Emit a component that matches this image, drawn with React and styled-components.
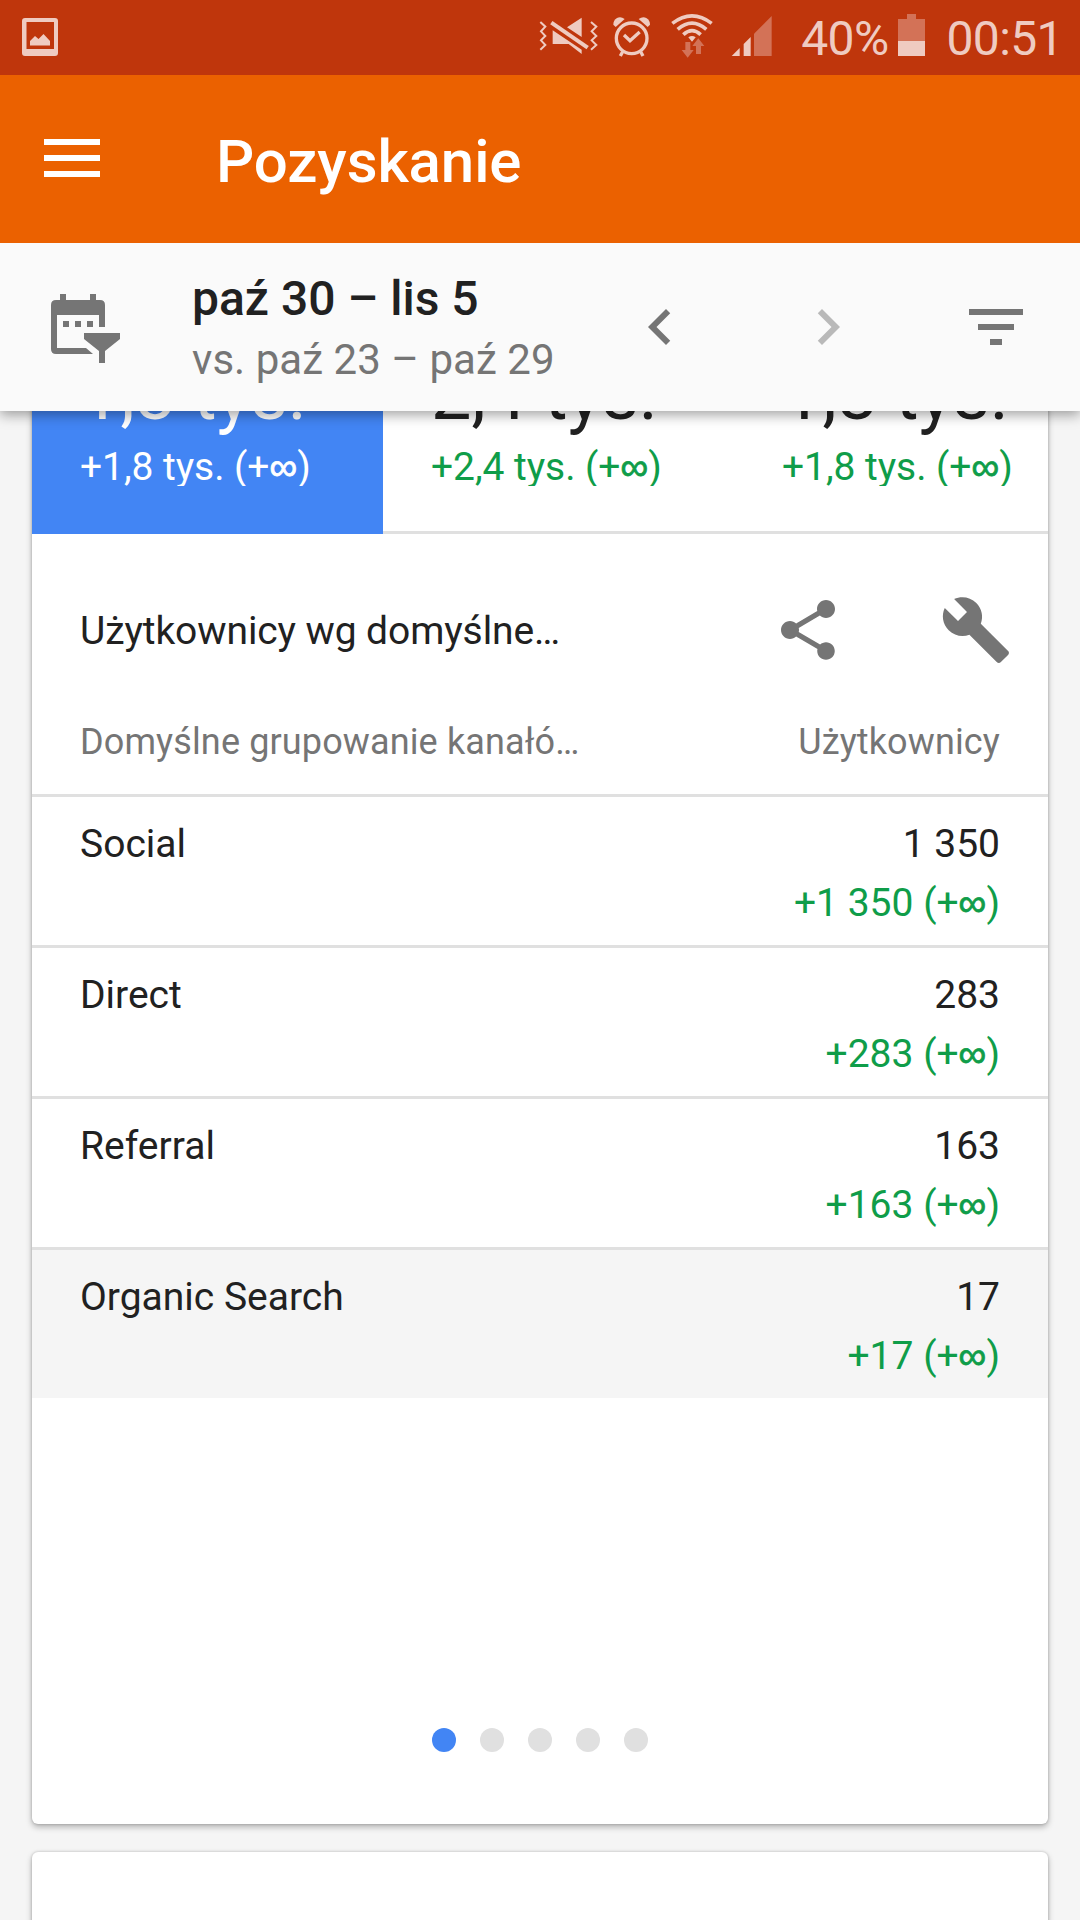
import { useState } from "react";
import styled, { createGlobalStyle } from "styled-components";

const metrics = [
  { value: "1,8 tys.", delta: "+1,8 tys." },
  { value: "2,4 tys.", delta: "+2,4 tys." },
  { value: "1,8 tys.", delta: "+1,8 tys." },
];

const channels = [
  { name: "Social", value: "1 350", delta: "+1 350" },
  { name: "Direct", value: "283", delta: "+283" },
  { name: "Referral", value: "163", delta: "+163" },
  { name: "Organic Search", value: "17", delta: "+17" },
];

function StatusIcons() {
  return (
    <StatusSvg width="227" height="75" viewBox="0 0 681 225">
      {/* vibrate / muted */}
      <g transform="translate(-28 0)">
        <g fill="none" stroke="#efcbc1" strokeWidth="6">
          <path d="M32 66L47 80L34 94L47 108L34 121L47 135L32 149" />
          <path d="M184 66L200 80L186 94L200 108L186 121L200 135L184 149" />
        </g>
        <path d="M112 82L156 53V111ZM69 91L156 149V162L117 132H69Z" fill="#efcbc1" />
        <path d="M65 68L174 143" stroke="#efcbc1" strokeWidth="12" />
      </g>
      {/* alarm */}
      <g transform="translate(-28 0)" fill="none" stroke="#efcbc1">
        <circle cx="306" cy="115" r="46" strokeWidth="10" />
        <path d="M283 105L301 122L330 96" strokeWidth="10" />
        <path d="M279 155L272 168M333 155L340 168" strokeWidth="10" />
        <path d="M258 81L251 74Q251 61 262 54Q273 48 285 57Z" fill="#efcbc1" stroke="none" />
        <path d="M354 81L361 74Q361 61 350 54Q339 48 327 57Z" fill="#efcbc1" stroke="none" />
      </g>
      {/* wifi */}
      <g transform="translate(-28 0)">
        <g fill="none" stroke="#efcbc1" strokeWidth="11">
          <path d="M428 70Q487 25 546 70" />
          <path d="M444 88Q487 51 530 88" />
          <path d="M461 104Q487 80 513 104" />
        </g>
        <path d="M476 112Q487 104 498 112L487 125Z" fill="#efcbc1" />
        <path d="M467 126H482V150H492L474 173L456 150H467Z" fill="#d37257" />
        <path d="M499 162V138H488L506 115L524 138H514V162Z" fill="#d37257" />
      </g>
      {/* signal */}
      <g transform="translate(-28 0)" fill="#efcbc1">
        <path d="M606 168L630 144V168Z" />
        <path d="M642 168V132L663 111V168Z" />
        <path d="M673 168V101L726 48V168Z" fill="#d37257" />
      </g>
    </StatusSvg>
  );
}

function App() {
  const [active, setActive] = useState(0);
  const [page, setPage] = useState(0);

  return (
    <>
      <GlobalStyle />
      <Screen>
        <StatusBar>
          <PictureIcon width="36" height="38" viewBox="0 0 36 38">
            <path
              fillRule="evenodd"
              d="M3 0H33Q36 0 36 3V35Q36 38 33 38H3Q0 38 0 35V3Q0 0 3 0ZM4.5 4V31H32V4Z"
            />
            <path d="M8 27.5V23L13 18L16.5 21L21.5 16L28 23V27.5Z" />
          </PictureIcon>
          <StatusIcons />
          <StatusText>40%</StatusText>
          <Battery width="27" height="42" viewBox="0 0 27 42">
            <path d="M0 5H9V0H18V5H27V27H0Z" fill="#d37257" />
            <path d="M0 27H27V42H0Z" fill="#efcbc1" />
          </Battery>
          <StatusText>00:51</StatusText>
        </StatusBar>

        <AppBar>
          <MenuButton>
            <span />
            <span />
            <span />
          </MenuButton>
          <AppTitle>Pozyskanie</AppTitle>
        </AppBar>

        <DateBar>
          <CalendarIcon width="69" height="69" viewBox="0 0 69 69">
            <path
              fillRule="evenodd"
              d="M9 0H15V6H39V0H45V6H49Q54 6 54 11V33H48V21H6V54H35L42 60H5Q0 60 0 55V11Q0 6 5 6H9Z"
            />
            <path d="M12 27H18V33H12ZM24 27H30V33H24ZM36 27H42V33H36Z" />
            <path d="M33 39H69V45L54 57V69H48V57L33 45Z" />
          </CalendarIcon>
          <DateRange>
            <DateMain>paź 30 – lis 5</DateMain>
            <DateCompare>vs. paź 23 – paź 29</DateCompare>
          </DateRange>
          <DateActions>
            <Icon viewBox="0 0 24 24">
              <path d="M15.41 7.41L14 6l-6 6 6 6 1.41-1.41L10.83 12z" />
            </Icon>
            <Icon viewBox="0 0 24 24" $color="#b9b9b9">
              <path d="M10 6L8.59 7.41 13.17 12l-4.58 4.59L10 18l6-6z" />
            </Icon>
            <Icon viewBox="0 0 24 24">
              <path d="M10 18h4v-2h-4v2zM3 6v2h18V6H3zm3 7h12v-2H6v2z" />
            </Icon>
          </DateActions>
        </DateBar>

        <Content>
          <ReportCard>
            <Metrics>
              {metrics.map((metric, i) => (
                <Metric key={i} $active={i === active} onClick={() => setActive(i)}>
                  <MetricValue>{metric.value}</MetricValue>
                  <MetricDelta>
                    {metric.delta} (+<Infinite>∞</Infinite>)
                  </MetricDelta>
                </Metric>
              ))}
            </Metrics>
            <CardHeader>
              <CardTitle>Użytkownicy wg domyślne…</CardTitle>
              <CardActions>
                <Icon viewBox="0 0 24 24">
                  <path d="M18 16.08c-.76 0-1.44.3-1.96.77L8.91 12.7c.05-.23.09-.46.09-.7s-.04-.47-.09-.7l7.05-4.11c.54.5 1.25.81 2.04.81 1.66 0 3-1.34 3-3s-1.34-3-3-3-3 1.34-3 3c0 .24.04.47.09.7L8.04 9.81C7.5 9.31 6.79 9 6 9c-1.66 0-3 1.34-3 3s1.34 3 3 3c.79 0 1.5-.31 2.04-.81l7.12 4.16c-.05.21-.08.43-.08.65 0 1.61 1.31 2.92 2.92 2.92 1.61 0 2.92-1.31 2.92-2.92s-1.31-2.92-2.92-2.92z" />
                </Icon>
                <Icon viewBox="0 0 24 24">
                  <path d="M22.7 19l-9.1-9.1c.9-2.3.4-5-1.5-6.9-2-2-5-2.4-7.4-1.3L9 6 6 9 1.6 4.7C.4 7.1.9 10.1 2.9 12.1c1.9 1.9 4.6 2.4 6.9 1.5l9.1 9.1c.4.4 1 .4 1.4 0l2.3-2.3c.5-.4.5-1.1.1-1.4z" />
                </Icon>
              </CardActions>
            </CardHeader>
            <ColumnHeads>
              <span>Domyślne grupowanie kanałó…</span>
              <span>Użytkownicy</span>
            </ColumnHeads>
            {channels.map((channel) => (
              <Row key={channel.name}>
                <div>{channel.name}</div>
                <RowValues>
                  <div>{channel.value}</div>
                  <Delta>
                    {channel.delta} (+<Infinite>∞</Infinite>)
                  </Delta>
                </RowValues>
              </Row>
            ))}
            <Pager>
              {[0, 1, 2, 3, 4].map((n) => (
                <Dot key={n} $active={n === page} onClick={() => setPage(n)} />
              ))}
            </Pager>
          </ReportCard>
          <NextCard />
        </Content>
      </Screen>
    </>
  );
}

export default App;


const GlobalStyle = createGlobalStyle`
  *{
    box-sizing:border-box;
  }
  body{
    margin:0;
    background-color:#f5f5f5;
    font-family:Roboto, sans-serif;
    color:#212121;
  }
`;

const Screen = styled.div`
  width:1080px;
  height:1920px;
  display:flex;
  flex-direction:column;
  overflow:hidden;
  background-color:#f5f5f5;
`;

const StatusBar = styled.div`
  height:75px;
  flex:none;
  display:flex;
  align-items:flex-start;
  padding-right:17px;
  background-color:#bf360c;
`;

const PictureIcon = styled.svg`
  margin:18px 0 0 22px;
  fill:#efcbc1;
`;

const StatusSvg = styled.svg`
  margin-left:auto;
  margin-right:35px;
  overflow:visible;
`;

const StatusText = styled.div`
  font-size:48px;
  line-height:77px;
  letter-spacing:-0.6px;
  color:#efcbc1;
`;

const Battery = styled.svg`
  margin:14px 21px 0 10px;
`;

const AppBar = styled.div`
  height:168px;
  flex:none;
  display:flex;
  align-items:center;
  padding-left:44px;
  background-color:#eb6100;
`;

const MenuButton = styled.div`
  width:56px;
  display:flex;
  flex-direction:column;
  gap:10px;
  padding-bottom:2px;

  span{
    height:6px;
    background-color:white;
  }
`;

const AppTitle = styled.h1`
  margin:0;
  padding:5px 0 0 116px;
  font-size:60px;
  font-weight:500;
  line-height:70px;
  letter-spacing:-0.1px;
  color:white;
`;

const DateBar = styled.div`
  height:168px;
  flex:none;
  display:flex;
  align-items:flex-start;
  padding:0 48px 0 51px;
  background-color:#fafafa;
  position:relative;
  z-index:1;
  box-shadow:0 4px 12px rgba(0,0,0,0.36);
  /* the shadow falls downwards only */
  clip-path:inset(0 0 -24px 0);
`;

const CalendarIcon = styled.svg`
  flex:none;
  margin-top:51px;
  fill:#757575;
`;

const DateRange = styled.div`
  margin-left:72px;
  padding-top:28px;
  white-space:nowrap;
`;

const DateMain = styled.div`
  font-size:48px;
  font-weight:500;
  line-height:56px;
`;

const DateCompare = styled.div`
  margin-top:8px;
  font-size:42px;
  line-height:50px;
  letter-spacing:0.05px;
  color:#757575;
`;

const DateActions = styled.div`
  display:flex;
  gap:96px;
  margin:48px 0 0 auto;
`;

const Icon = styled.svg`
  width:72px;
  height:72px;
  display:block;
  fill:${(props) => props.$color || "#757575"};
`;

const Content = styled.div`
  flex:1;
  min-height:0;
  overflow:hidden;
  padding:0 32px;
`;

const Card = styled.div`
  background-color:white;
  border-radius:6px;
  box-shadow:0 3px 6px rgba(0,0,0,0.28), 0 0 3px rgba(0,0,0,0.2);
`;

/* scrolled up, so its top sits under the date bar */
const ReportCard = styled(Card)`
  height:1484px;
  margin-top:-71px;
  display:flex;
  flex-direction:column;
`;

const NextCard = styled(Card)`
  height:200px;
  margin-top:28px;
`;

const Infinite = styled.span`
  font-family:"Liberation Sans", Arial, sans-serif;
  line-height:0;
  -webkit-text-stroke:0.8px currentColor;
`;

const Metrics = styled.div`
  display:flex;
  height:194px;
  overflow:hidden;
`;

const MetricValue = styled.div`
  font-size:72px;
  line-height:84px;
`;

const MetricDelta = styled.div`
  height:38px;
  margin-top:11px;
  overflow:hidden;
  font-size:39px;
  line-height:38px;
  letter-spacing:-0.06px;
`;

const Metric = styled.div`
  width:351px;
  flex:none;
  padding:13px 0 0 48px;
  white-space:nowrap;
  background-color:${(props) => (props.$active ? "#4285f4" : "white")};
  border-bottom:3px solid ${(props) => (props.$active ? "#4285f4" : "#e0e0e0")};
  color:${(props) => (props.$active ? "white" : "#212121")};

  ${MetricDelta}{
    color:${(props) => (props.$active ? "white" : "#0f9d49")};
  }
`;

const CardHeader = styled.div`
  display:flex;
  justify-content:space-between;
  padding:60px 36px 0 48px;
`;

const CardTitle = styled.div`
  font-size:39px;
  line-height:72px;
  height:72px;
  padding-top:1px;
  letter-spacing:-0.1px;
`;

const CardActions = styled.div`
  display:flex;
  gap:96px;
`;

const ColumnHeads = styled.div`
  display:flex;
  justify-content:space-between;
  padding:54px 48px 30px;
  border-bottom:3px solid #e0e0e0;
  font-size:36px;
  line-height:44px;
  letter-spacing:0.13px;
  color:#757575;
`;

const Row = styled.div`
  height:151px;
  display:flex;
  justify-content:space-between;
  padding:18px 48px 0;
  border-bottom:3px solid #e0e0e0;
  font-size:39px;
  line-height:59px;

  &:nth-last-child(2){
    height:148px;
    border-bottom:0;
    background-color:#f5f5f5;
  }
`;

const RowValues = styled.div`
  text-align:right;
`;

const Delta = styled.div`
  color:#0f9d49;
`;

const Pager = styled.div`
  display:flex;
  justify-content:center;
  gap:24px;
  margin-top:auto;
  padding-bottom:72px;
`;

const Dot = styled.div`
  width:24px;
  height:24px;
  border-radius:50%;
  background-color:${(props) => (props.$active ? "#4285f4" : "#e0e0e0")};
`;
